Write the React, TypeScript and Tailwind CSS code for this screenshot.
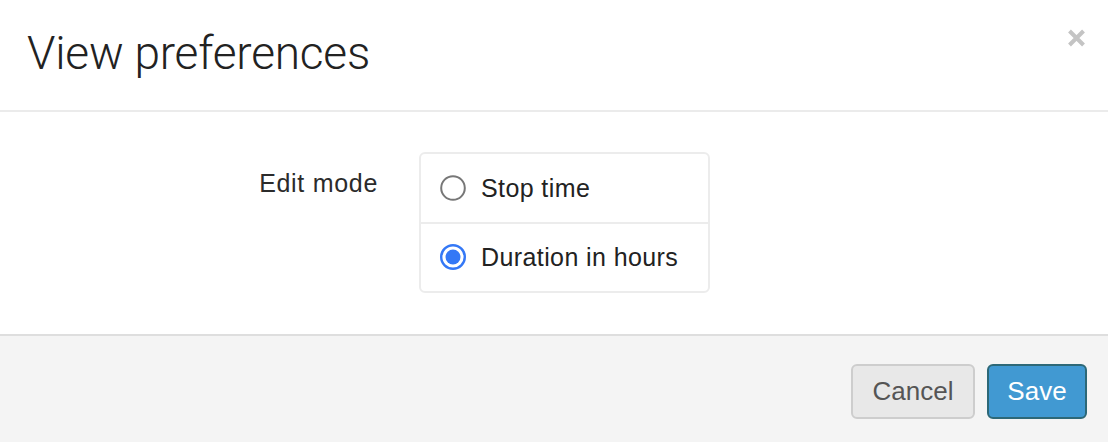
import React, { useState } from 'react'

const options = [
  { id: 'stop', label: 'Stop time' },
  { id: 'duration', label: 'Duration in hours' },
]

function Radio({ checked }: { checked: boolean }) {
  return (
    <svg width="26" height="26" viewBox="0 0 26 26" className="shrink-0">
      {checked ? (
        <>
          <circle cx="13" cy="13" r="11.8" fill="#fff" stroke="#3478f6" strokeWidth="2.4" />
          <circle cx="13" cy="13" r="7.5" fill="#3478f6" />
        </>
      ) : (
        <circle cx="13" cy="13" r="11.8" fill="#fff" stroke="#777" strokeWidth="2" />
      )}
    </svg>
  )
}

export default function App() {
  const [mode, setMode] = useState('duration')

  return (
    <div className="w-[1108px] h-[442px] bg-white flex flex-col overflow-hidden" style={{ fontFamily: '"Liberation Sans", Arial, sans-serif' }}>
      {/* Header */}
      <div className="h-[112px] shrink-0 border-b-2 border-[#ebebeb] flex items-start justify-between pl-[27px] pr-[22px]">
        <h1
          className="mt-[23px] text-[46px] leading-[60px] font-light text-[#222] tracking-[-0.2px]"
          style={{ fontFamily: 'Roboto, "Liberation Sans", sans-serif' }}
        >
          View preferences
        </h1>
        <button className="mt-[29px] w-[19px] h-[18px]">
          <svg width="19" height="18" viewBox="0 0 19 18">
            <path d="M2.5 2 L16.5 16 M16.5 2 L2.5 16" stroke="#c4c4c4" strokeWidth="4" strokeLinecap="butt" />
          </svg>
        </button>
      </div>

      {/* Body */}
      <div className="h-[222px] shrink-0 flex pt-[40px]">
        <div className="w-[378px] flex justify-end pt-[16px]">
          <span className="text-[25px] leading-[30px] text-[#2b2b2b] tracking-[0.7px]">Edit mode</span>
        </div>
        <div className="ml-[41px] w-[291px] h-[141px] border-2 border-[#ececec] rounded-[6px] flex flex-col">
          {options.map((o, i) => (
            <label
              key={o.id}
              onClick={() => setMode(o.id)}
              className={
                'flex-1 flex items-center gap-[15px] pl-[19px] cursor-pointer ' +
                (i === 0 ? 'border-b-2 border-[#ececec]' : '')
              }
            >
              <Radio checked={mode === o.id} />
              <span className="text-[25px] leading-[30px] text-[#222] tracking-[0.4px]">{o.label}</span>
            </label>
          ))}
        </div>
      </div>

      {/* Footer */}
      <div className="flex-1 border-t-2 border-[#dedede] bg-[#f4f4f4] flex justify-end items-start gap-[12px] pt-[28px] pr-[21px]">
        <button className="w-[124px] h-[55px] rounded-[6px] border-2 border-[#cdcdcd] bg-[#e8e8e8] text-[26px] text-[#555]">
          Cancel
        </button>
        <button className="w-[100px] h-[55px] rounded-[6px] border-2 border-[#2d6877] bg-[#4199d2] text-[26px] text-white">
          Save
        </button>
      </div>
    </div>
  )
}
